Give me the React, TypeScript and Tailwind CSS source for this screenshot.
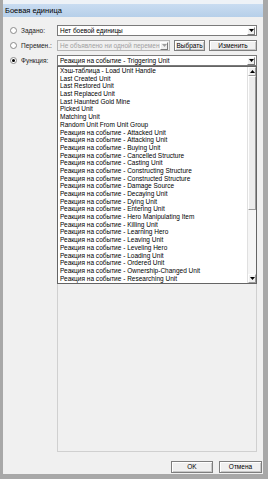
import React from 'react';

const items = [
  "Хэш-таблица - Load Unit Handle",
  "Last Created Unit",
  "Last Restored Unit",
  "Last Replaced Unit",
  "Last Haunted Gold Mine",
  "Picked Unit",
  "Matching Unit",
  "Random Unit From Unit Group",
  "Реакция на событие - Attacked Unit",
  "Реакция на событие - Attacking Unit",
  "Реакция на событие - Buying Unit",
  "Реакция на событие - Cancelled Structure",
  "Реакция на событие - Casting Unit",
  "Реакция на событие - Constructing Structure",
  "Реакция на событие - Constructed Structure",
  "Реакция на событие - Damage Source",
  "Реакция на событие - Decaying Unit",
  "Реакция на событие - Dying Unit",
  "Реакция на событие - Entering Unit",
  "Реакция на событие - Hero Manipulating Item",
  "Реакция на событие - Killing Unit",
  "Реакция на событие - Learning Hero",
  "Реакция на событие - Leaving Unit",
  "Реакция на событие - Leveling Hero",
  "Реакция на событие - Loading Unit",
  "Реакция на событие - Ordered Unit",
  "Реакция на событие - Ownership-Changed Unit",
  "Реакция на событие - Researching Unit",
];

const Arrow = ({ up = false, muted = false }: { up?: boolean; muted?: boolean }) => (
  <svg width="5" height="3" viewBox="0 0 5 3" className={up ? 'rotate-180' : ''}>
    <path d="M0 0h5L2.5 3z" fill={muted ? '#a0a0a0' : '#000'} />
  </svg>
);

const DropBtn = ({ muted = false }: { muted?: boolean }) => (
  <div className="w-[8px] h-[8px] mr-[1px] shrink-0 flex items-center justify-center bg-[#f0f0f0] border border-t-white border-l-white border-r-[#7a7a7a] border-b-[#7a7a7a]">
    <Arrow muted={muted} />
  </div>
);

const Radio = ({ checked = false }: { checked?: boolean }) => (
  <div className="w-[7px] h-[7px] rounded-full bg-white border border-[#8a8a8a] flex items-center justify-center">
    {checked && <div className="w-[3px] h-[3px] rounded-full bg-black" />}
  </div>
);

// height comes from the wrapper
const Button = ({ children, className = '' }: { children: React.ReactNode; className?: string }) => (
  <div className={`flex items-center justify-center bg-[#f0f0f0] border border-[#7e7e7e] shadow-[inset_1px_1px_0_#fff,inset_-1px_-1px_0_#c8c8c8] text-[6.5px] ${className}`}>
    {children}
  </div>
);

export default function App() {
  return (
    <div
      className="w-[268px] h-[479px] pl-[3px] pr-[5px] pb-[5px] bg-[#a8a8a8] text-black overflow-hidden"
      style={{ fontFamily: '"Liberation Sans", Arial, sans-serif' }}
    >
      <div className="h-full flex flex-col bg-[#f0f0f0]">
        <div className="h-[4px] bg-[#eef2f7]" />
        <div className="h-[13px] flex items-center pl-[2px] bg-gradient-to-b from-[#c9dcf1] to-[#b6cfe9] text-[7.5px]">
          <span>Боевая единица</span>
        </div>

        <div className="relative flex-1 flex flex-col pt-[8px] pb-[1px]">
          {/* rows */}
          <div className="flex flex-col gap-[4px] pr-[6px]">
            <div className="h-[11px] flex items-center">
              <div className="w-[18px] flex justify-center pl-[2px]"><Radio /></div>
              <span className="w-[36px] text-[6.5px] text-[#222]">Задано:</span>
              <div className="flex-1 h-full flex items-center justify-between bg-white border border-[#7a7a7a]">
                <span className="pl-[2px] text-[6.5px]">Нет боевой единицы</span>
                <DropBtn />
              </div>
            </div>
            <div className="h-[11px] flex items-center">
              <div className="w-[18px] flex justify-center pl-[2px]"><Radio /></div>
              <span className="w-[36px] text-[6.5px] text-[#222]">Перемен.:</span>
              <div className="w-[113px] h-full flex items-center justify-between bg-[#f0f0f0] border border-[#b5b5b5] overflow-hidden">
                <span className="pl-[2px] text-[6.5px] text-[#a0a0a0] whitespace-nowrap overflow-hidden">Не объявлено ни одной перемен</span>
                <DropBtn muted />
              </div>
              <Button className="h-full ml-[4px] w-[31px]">Выбрать</Button>
              <Button className="h-full ml-[4px] flex-1">Изменить</Button>
            </div>
            <div className="h-[11px] flex items-center">
              <div className="w-[18px] flex justify-center pl-[2px]"><Radio checked /></div>
              <span className="w-[36px] text-[6.5px] text-[#222]">Функция:</span>
              <div className="flex-1 h-full flex items-center justify-between bg-white border border-[#7a7a7a]">
                <span className="pl-[2px] text-[6.5px]">Реакция на событие - Triggering Unit</span>
                <DropBtn />
              </div>
            </div>
          </div>

          {/* panel behind the list */}
          <div className="flex-1 ml-[54px] mr-[6px] border border-[#d0d0d0] border-t-0" />

          {/* bottom buttons */}
          <div className="h-[21px] flex items-end justify-end gap-[6px] pr-[1px]">
            <Button className="h-[12px] w-[42px]">OK</Button>
            <Button className="h-[12px] w-[43px]">Отмена</Button>
          </div>

          {/* dropdown list */}
          <div className="absolute left-[54px] right-[6px] top-[49px] h-[218px] flex bg-white border border-[#646464]">
            <div className="flex-1 flex flex-col pl-[2px] overflow-hidden">
              {items.map((t) => (
                <div key={t} className="h-[7.7px] leading-[7.7px] text-[6.5px] whitespace-nowrap">{t}</div>
              ))}
            </div>
            <div className="w-[9px] flex flex-col bg-[#f5f5f5] border-l border-[#e0e0e0]">
              <div className="h-[9px] flex items-center justify-center bg-[#f0f0f0] border border-t-white border-l-white border-r-[#9a9a9a] border-b-[#9a9a9a]">
                <Arrow up />
              </div>
              <div className="h-[134px] bg-[#ececec] border border-t-white border-l-white border-r-[#9a9a9a] border-b-[#9a9a9a]" />
              <div className="flex-1" />
              <div className="h-[9px] flex items-center justify-center bg-[#f0f0f0] border border-t-white border-l-white border-r-[#9a9a9a] border-b-[#9a9a9a]">
                <Arrow />
              </div>
            </div>
          </div>
        </div>
      </div>
    </div>
  );
}
